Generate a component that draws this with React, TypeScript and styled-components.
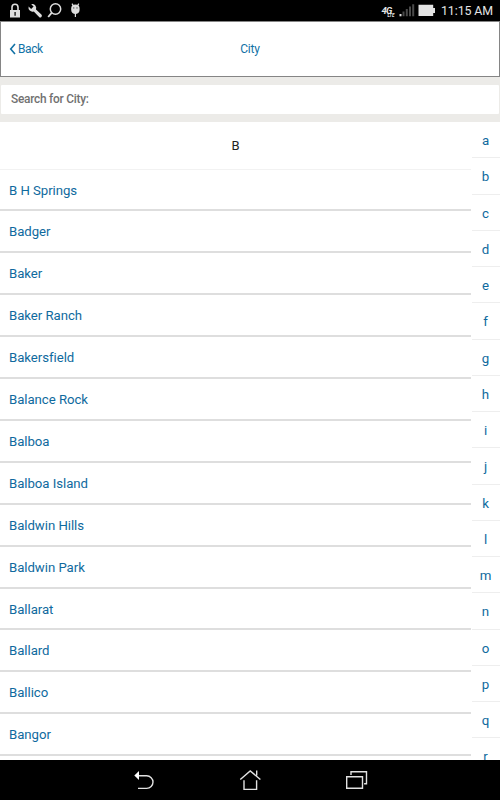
import React from "react";
import styled, { createGlobalStyle } from "styled-components";

const GlobalStyle = createGlobalStyle`
  * { box-sizing: border-box; }
  body { margin: 0; background: #fff; font-family: Roboto, sans-serif; overflow: hidden; }
`;

const Screen = styled.div`
  width: 500px;
  height: 800px;
  display: flex;
  flex-direction: column;
  overflow: hidden;
`;

const StatusBar = styled.div`
  height: 21px;
  flex: none;
  display: flex;
  justify-content: space-between;
  background: #000;
`;

const Clock = styled.span`
  width: 60px;
  padding-left: 1px;
  color: #e4e4e4;
  font-size: 12.4px;
  letter-spacing: -0.1px;
  line-height: 22px;
  white-space: nowrap;
`;

const StatusRight = styled.div`
  display: flex;
`;

const Header = styled.header`
  height: 56px;
  flex: none;
  display: grid;
  grid-template-columns: 1fr auto 1fr;
  align-items: center;
  border: 1px solid #858585;
  color: #1272a6;
  font-size: 12px;
  letter-spacing: -0.15px;
  background: #fff;
`;

const Back = styled.div`
  display: flex;
  align-items: center;
  gap: 2px;
  padding-left: 8px;
  letter-spacing: -0.4px;
`;

const Title = styled.div`
  padding-left: 0;
`;

const SearchArea = styled.div`
  height: 45px;
  flex: none;
  padding: 8px 1px;
  background: #ecebe8;
`;

const SearchField = styled.div`
  height: 29px;
  padding-left: 10px;
  border-radius: 1px;
  background: #fff;
  color: #717171;
  font-size: 11.9px;
  font-weight: 500;
  letter-spacing: -0.25px;
  line-height: 29px;
`;

const Content = styled.main`
  flex: 1;
  min-height: 0;
  display: flex;
  overflow: hidden;
`;

const List = styled.div`
  width: 471px;
  flex: none;
`;

const GroupHeading = styled.div`
  height: 47.6px;
  border-bottom: 1px solid #f2f2f2;
  color: #222;
  font-size: 13px;
  line-height: 48px;
  text-align: center;
`;

const CityRow = styled.div`
  height: 41.9px;
  padding-left: 9px;
  border-bottom: 2px solid #dedede;
  color: #0f6a9e;
  font-size: 13.2px;
  line-height: 42.6px;
  letter-spacing: -0.04px;
`;

const LetterIndex = styled.div`
  flex: 1;
  padding-left: 1px;
`;

const Letter = styled.div`
  height: 36.25px;
  padding-right: 1px;
  border-bottom: 1px solid #eeeeee;
  color: #0f6a9e;
  font-size: 13.3px;
  line-height: 38px;
  text-align: center;
`;

const NavBar = styled.nav`
  height: 40px;
  flex: none;
  display: flex;
  justify-content: center;
  background: #000;
`;

const cities = [
  "B H Springs", "Badger", "Baker", "Baker Ranch", "Bakersfield", "Balance Rock", "Balboa",
  "Balboa Island", "Baldwin Hills", "Baldwin Park", "Ballarat", "Ballard", "Ballico", "Bangor",
];
const letters = "abcdefghijklmnopqr".split("");

const NotificationIcons = () => (
  <svg width="90" height="21" viewBox="0 0 90 21" fill="none">
    <path d="M12 11V7.3a3 3 0 0 1 6 0V11" stroke="#ddd" strokeWidth="1.6" />
    <path d="M10 10h10v7.5H10z" fill="#ddd" />
    <path d="M14.3 12h1.6v3.8h-1.6z" fill="#333" />
    <path d="M31.2 4.2a4 4 0 0 1 4.8 5.2l5.4 5.2a1.6 1.6 0 0 1-2.3 2.3L33.8 11.4a4 4 0 0 1-5.2-4.8l2.5 2.3 2.5-2.4z" fill="#ddd" />
    <circle cx="55.5" cy="9" r="5.2" stroke="#ddd" strokeWidth="1.5" />
    <path d="M51.8 12.7 48.2 17" stroke="#ddd" strokeWidth="1.8" />
    <path d="M71.2 8.2a4.2 3.8 0 0 1 8.4 0v1.7c0 2.5-2.1 4-4.2 4s-4.2-1.5-4.2-4z" fill="#ddd" />
    <path d="m72 3.6 1.2 2m5.6-2-1.2 2M75.4 13v4" stroke="#ddd" strokeWidth="1.2" />
    <circle cx="73.8" cy="7.9" r=".6" fill="#333" />
    <circle cx="77" cy="7.9" r=".6" fill="#333" />
  </svg>
);

const NetworkText = styled.text`
  fill: #e4e4e4;
  font-family: Roboto, sans-serif;
  font-weight: 700;
  font-style: italic;
`;

const SignalIcons = () => (
  <svg width="60" height="21" viewBox="380 0 60 21">
    <NetworkText x="381.5" y="14" fontSize="9.5" letterSpacing="-.8">4G</NetworkText>
    <NetworkText x="387.5" y="17" fontSize="4.4">LTE</NetworkText>
    <path d="M399.5 14h2v2.3h-2z" fill="#ddd" />
    <path d="M402.5 11.5h2v4.8h-2zM405.8 9h2v7.3h-2zM409 6.5h2v9.8h-2zM412.2 4.3h2v12h-2z" fill="#4a4a4a" />
    <path d="M418.5 4.7h14.7V8h1.8v5h-1.8v3h-14.7z" fill="#e4e4e4" />
  </svg>
);

const NavigationIcons = () => (
  <svg width="260" height="40" viewBox="120 0 260 40" fill="none" stroke="#e2e2e2" strokeWidth="1.4">
    <path d="M138.5 15.8h8.2a6.3 6.3 0 0 1 0 12.6H138" />
    <path d="M134.3 15.5 139 11v9z" fill="#fff" stroke="none" />
    <path d="m240.3 19.5 9.9-8.6 10.2 8.6M256.7 15.5v-5M244 20.2v9.2h12.6v-9.2" />
    <path d="M346.7 16.7h15.8v11.6h-15.8zM351 15v-3.2h15.5v12h-2.4" />
  </svg>
);

export default function App() {
  return (
    <Screen>
      <GlobalStyle />
      <StatusBar>
        <NotificationIcons />
        <StatusRight>
          <SignalIcons />
          <Clock>11:15 AM</Clock>
        </StatusRight>
      </StatusBar>
      <Header>
        <Back>
          <svg width="7" height="12" viewBox="0 0 7 12" fill="none">
            <path d="M6 1 1.7 6 6 11" stroke="#1272a6" strokeWidth="1.6" />
          </svg>
          Back
        </Back>
        <Title>City</Title>
      </Header>
      <SearchArea>
        <SearchField>Search for City:</SearchField>
      </SearchArea>
      <Content>
        <List>
          <GroupHeading>B</GroupHeading>
          {cities.map((city) => <CityRow key={city}>{city}</CityRow>)}
        </List>
        <LetterIndex>
          {letters.map((letter) => <Letter key={letter}>{letter}</Letter>)}
        </LetterIndex>
      </Content>
      <NavBar><NavigationIcons /></NavBar>
    </Screen>
  );
}
